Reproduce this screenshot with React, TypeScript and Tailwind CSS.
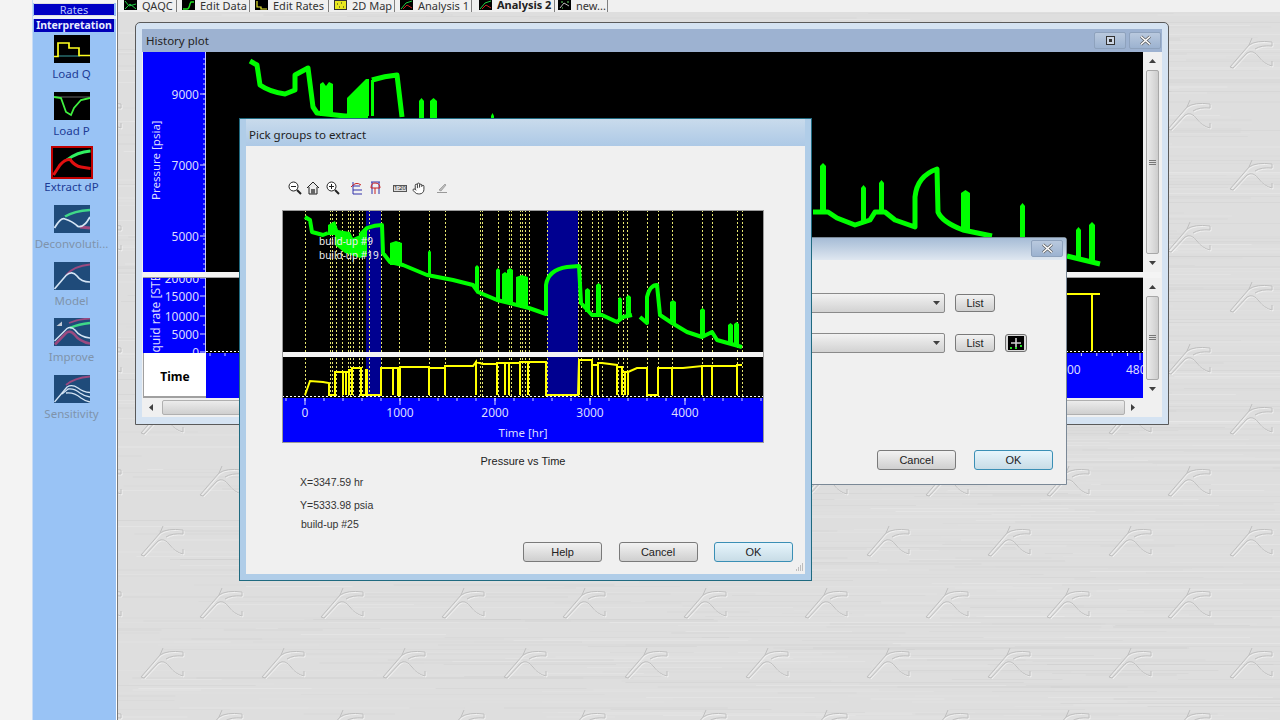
import React from "react";
import { Hand } from "lucide-react";

const streaks: { x: number; y: number; w: number; c: string; o: number }[] = [];
let seed = 12345;
const rnd = () => {
  seed = (seed * 16807) % 2147483647;
  return seed / 2147483647;
};
for (let y = 0; y < 720; y += 1.5) {
  const n = 1 + Math.floor(rnd() * 3);
  for (let i = 0; i < n; i++) {
    streaks.push({
      x: 118 + rnd() * 1162 - 100,
      y,
      w: 60 + rnd() * 420,
      c: rnd() > 0.5 ? "#ffffff" : "#bcbcbc",
      o: 0.06 + rnd() * 0.16,
    });
  }
}

const MAIN_GREEN =
  "M250 61 L257 65 L260 85 Q270 92 285 94 L295 90 V75 L308 68 L313 107 L317 113 L345 116 L368 116 M372 80 Q385 76 397 75 L402 117 M813 212 L828 212 L837 218 L855 225 L870 220 L875 212 L885 212 L895 220 L915 227 V197 Q917 176 937 169 L938 212 Q942 222 963 230 L992 236 M1067 256 L1100 264";
const MAIN_BLOCKS = ["320,116 320,84 323,82 326,86 329,82 333,84 333,116", "347,116 347,98 357,88 366,79 369,79 369,116", "371,116 371,80 374,80 374,116"];
const MAIN_SPIKES: [number, number, number, number][] = [
  [419, 5, 98, 120], [430, 7, 98, 120], [491, 3, 113, 120], [820, 6, 163, 214], [861, 5, 185, 222], [879, 5, 180, 213], [961, 9, 190, 232], [1020, 5, 203, 240], [1076, 5, 227, 259], [1089, 6, 222, 263],
];

const PICK_GREEN =
  "M305 217 L310 220 L312 232 L323 235 L328 233 M360 235 L367 228 Q375 225 382 225 L383 253 L390 262 L403 265 L427 275 L453 280 L473 285 L478 292 L497 300 L529 308 L546 314 V285 Q548 270 567 267 L579 266 L581 303 L592 315 L602 315 L617 322 L623 317 L632 315 M640 317 L647 323 V297 Q650 285 657 285 L660 315 L672 323 L687 332 L702 337 L712 332 L717 340 L742 347";
const PICK_BLOB = "328,225 335,221 338,230 350,232 353,238 360,235 367,228 367,256 360,258 345,253 335,245 335,235 328,235";
const PICK_SPIKES: [number, number, number, number][] = [
  [390, 12, 241, 265], [428, 3, 250, 276], [475, 4, 265, 290], [496, 4, 268, 300], [502, 6, 272, 302], [507, 6, 268, 303], [516, 12, 275, 306], [585, 5, 288, 312], [596, 5, 283, 315], [618, 4, 297, 318], [626, 5, 295, 315], [670, 6, 300, 323], [700, 5, 308, 337], [728, 5, 323, 345], [734, 5, 322, 347],
];
const PICK_YELLOW =
  "M305 395 L310 381 L323 382 L329 383 V395 H335 V372 H343 V395 V372 H346 V395 V372 H349 V395 V370 H352 V395 V368 H361 V395 H366 V370 H367 V395 H381 V368 H393 V395 V368 H398 V395 H400 V367 H429 V395 V368 H445 V395 V366 H473 L476 362 V395 V362 L483 364 H497 V395 V363 H505 V395 V363 H509 V395 V363 H520 V395 V362 H528 V395 V362 H546 V395 H578 V395 L579 360 V395 V360 H592 V395 V365 H598 V395 V363 H602 L617 365 V395 V367 H622 V395 V372 H625 V395 V372 H628 V395 V372 L637 368 H647 V395 H658 V368 H672 V395 V368 H683 L702 366 V395 V366 H712 V395 V366 H737 V395 V365 H742";
const DASHES = [305, 330, 332, 336, 342, 348, 350, 353, 359, 362, 369, 381, 399, 429, 445, 480, 482, 498, 509, 511, 520, 522, 525, 529, 547, 578, 581, 592, 598, 602, 618, 623, 627, 647, 658, 672, 702, 712, 737, 742];

const TICKS = Array.from({ length: 26 }, (_, i) => 286 + i * 19);

function Logo() {
  return (
    <g fill="none" strokeWidth="1">
      <g stroke="#ffffff" opacity="0.55" transform="translate(1 1)">
        <path d="M1 30 L20 8 Q27 3 43 5 V9 Q32 8 26 12" />
        <path d="M4 31 L18 16 Q24 12 30 20 Q35 27 43 29 V24" />
      </g>
      <g stroke="#bfbfbf">
        <path d="M1 30 L20 8 Q27 3 43 5 V9 Q32 8 26 12" />
        <path d="M4 31 L18 16 Q24 12 30 20 Q35 27 43 29 V24" />
        <path d="M20 8 L23 1" />
        <path d="M1 30 L4 31" />
      </g>
    </g>
  );
}

function Metal() {
  return (
    <svg className="absolute inset-0 h-full w-full" viewBox="118 0 1162 720" preserveAspectRatio="none">
      <defs>
        <pattern id="logo" x="562" y="587" width="121" height="122" patternUnits="userSpaceOnUse">
          <Logo />
          <g transform="translate(62 60)">
            <Logo />
          </g>
        </pattern>
      </defs>
      <rect x="118" y="0" width="1162" height="720" fill="#dedede" />
      {streaks.map((s, i) => (
        <line key={i} x1={s.x} x2={s.x + s.w} y1={s.y} y2={s.y} stroke={s.c} strokeOpacity={s.o} strokeWidth="1" />
      ))}
      <rect x="118" y="0" width="1162" height="720" fill="url(#logo)" />
    </svg>
  );
}

function TabIcon({ children, bg = "#000000" }: { children: React.ReactNode; bg?: string }) {
  return (
    <svg width="13" height="10" viewBox="0 0 13 10" className="shrink-0">
      <rect width="13" height="10" fill={bg} />
      {children}
    </svg>
  );
}

function Tab({ icon, label, w, bold }: { icon: React.ReactNode; label: string; w: string; bold?: boolean }) {
  return (
    <div className={`flex h-full items-start border-r border-[#808080] ${w}`}>
      {icon}
      <div className={bold ? "ml-[5px] whitespace-nowrap text-[11px] leading-[9px] font-bold text-[#222]" : "ml-[5px] whitespace-nowrap text-[11px] leading-[12px] text-[#333]"}>
        {label}
      </div>
    </div>
  );
}

function Tabs() {
  return (
    <div className="relative flex h-[12px] items-start bg-[#f0f0f0] pl-[6px]">
      <div className="mr-[5px] h-full"><Tab w="w-[53px]" label="QAQC" icon={<TabIcon><path d="M1 1 L5 6 L12 4 M1 9 L6 4 L12 9" stroke="#22cc44" fill="none" /></TabIcon>} /></div>
      <div className="mr-[5px] h-full"><Tab w="w-[68px]" label="Edit Data" icon={<TabIcon><path d="M1 9 H5 Q7 9 8 4 L9 2 H12" stroke="#22dd22" fill="none" strokeWidth="1.4" /></TabIcon>} /></div>
      <div className="mr-[5px] h-full"><Tab w="w-[74px]" label="Edit Rates" icon={<TabIcon><path d="M2 1 V7 H6 V9 H12" stroke="#eeee33" fill="none" strokeWidth="1.2" /></TabIcon>} /></div>
      <div className="mr-[5px] h-full"><Tab w="w-[61px]" label="2D Map" icon={<TabIcon bg="#e8e820"><rect x="0.5" y="0.5" width="12" height="9" fill="none" stroke="#333" /><path d="M3 4 h1 M7 3 h1 M5 7 h1 M9 7 h1" stroke="#222" /></TabIcon>} /></div>
      <div className="mr-[7px] h-full"><Tab w="w-[72px]" label="Analysis 1" icon={<TabIcon><path d="M1 9 L6 3 L12 1" stroke="#22cc44" fill="none" /><path d="M3 9 L7 5 L12 8" stroke="#cc2222" fill="none" /></TabIcon>} /></div>
      <div className="mr-[3px] h-full"><Tab bold w="w-[76px]" label="Analysis 2" icon={<TabIcon><path d="M1 9 L6 3 L12 1" stroke="#22cc44" fill="none" /><path d="M3 9 L7 5 L12 8" stroke="#cc2222" fill="none" /></TabIcon>} /></div>
      <Tab w="w-[50px]" label="new..." icon={<TabIcon><path d="M2 8 L6 3 L11 6" stroke="#bbbbbb" fill="none" /><path d="M3 2 h2 M9 2 h2 M4 8 h1" stroke="#66dd66" /></TabIcon>} />
    </div>
  );
}

const ARROW = { up: "M0 4 L3.5 0 L7 4 Z", down: "M0 0 L3.5 4 L7 0 Z", left: "M4 0 L0 3.5 L4 7 Z", right: "M0 0 L4 3.5 L0 7 Z" };

function Arrow({ dir }: { dir: keyof typeof ARROW }) {
  const horiz = dir === "left" || dir === "right";
  return (
    <svg width={horiz ? 4 : 7} height={horiz ? 7 : 4} viewBox={horiz ? "0 0 4 7" : "0 0 7 4"} className="shrink-0">
      <path d={ARROW[dir]} fill="#404040" />
    </svg>
  );
}

function VScroll({ h, thumb }: { h: string; thumb: string }) {
  return (
    <div className={`flex w-[18px] flex-col items-center bg-[#f0f0f0] ${h}`}>
      <div className="flex h-[18px] items-center"><Arrow dir="up" /></div>
      <div className={`flex w-[13px] flex-col items-center justify-center gap-[1px] rounded-[2px] border border-[#a8a8a8] bg-gradient-to-r from-[#ececec] to-[#cdcdcd] ${thumb}`}>
        <div className="h-px w-[7px] bg-[#777]" />
        <div className="h-px w-[7px] bg-[#777]" />
        <div className="h-px w-[7px] bg-[#777]" />
      </div>
      <div className="mt-auto flex h-[18px] items-center"><Arrow dir="down" /></div>
    </div>
  );
}

function WinBtn({ children, w }: { children: React.ReactNode; w: string }) {
  return (
    <div className={`flex h-[17px] items-center justify-center rounded-[2px] border border-[#8ea2bd] bg-gradient-to-b from-[#b9c9de] to-[#9cb2d0] ${w}`}>
      {children}
    </div>
  );
}

function CloseX() {
  return (
    <svg width="13" height="11" viewBox="0 0 13 11">
      <path d="M2 1.5 L11 9.5 M11 1.5 L2 9.5" stroke="#555" strokeWidth="3" />
      <path d="M2 1.5 L11 9.5 M11 1.5 L2 9.5" stroke="#fff" strokeWidth="1.6" />
    </svg>
  );
}

function YAxis({ vb, h, ticks, minor, children }: { vb: string; h: number; ticks: [number, string][]; minor: number[]; children: React.ReactNode }) {
  return (
    <svg viewBox={vb} width="63" height={h} className="block shrink-0 bg-[#0000ff]">
      {children}
      <line x1="205.5" x2="205.5" y1="0" y2="720" stroke="#c8c8ff" />
      {minor.map((y) => (
        <line key={y} x1="203" x2="206" y1={y} y2={y} stroke="#c8c8ff" />
      ))}
      {ticks.map(([y, t]) => (
        <g key={t}>
          <line x1="200" x2="206" y1={y} y2={y} stroke="#e0e0ff" />
          <text x="199" y={y + 4.5} textAnchor="end" fontSize="12" fill="#dcdcff">{t}</text>
        </g>
      ))}
    </svg>
  );
}

function HistoryWindow() {
  const rangeY = Array.from({ length: 45 }, (_, i) => 59 + i * 5);
  const smallY = [287, 306, 325, 344];
  return (
    <div className="absolute left-[17px] top-[22px] flex h-[403px] w-[1034px] flex-col rounded-t-[5px] border border-[#5a5a5a] bg-[#d5e3f2] px-[6px] pt-[6px]">
      <div className="flex h-[23px] shrink-0 items-center justify-between bg-[#9db2d1] pl-[4px] pr-[1px]">
        <span className="text-[11.5px] text-[#222]">History plot</span>
        <div className="flex gap-[3px]">
          <WinBtn w="w-[32px]"><div className="flex h-[9px] w-[9px] items-center justify-center border border-[#333] bg-[#cdd6e4]"><div className="h-[3px] w-[3px] bg-[#333]" /></div></WinBtn>
          <WinBtn w="w-[32px]"><CloseX /></WinBtn>
        </div>
      </div>
      <div className="flex h-[346px] shrink-0 bg-[#f0f0f0] pl-[1px]">
        <div className="flex w-[1000px] flex-col">
          <div className="flex h-[220px]">
            <YAxis vb="143 52 63 220" h={220} ticks={[[94, "9000"], [165, "7000"], [236, "5000"]]} minor={rangeY}>
              <text transform="rotate(-90 160 200)" x="160" y="200" fontSize="11.5" fill="#dcdcff">Pressure [psia]</text>
            </YAxis>
            <svg viewBox="206 52 937 220" width="937" height="220" className="block bg-black">
              <path d={MAIN_GREEN} fill="none" stroke="#00ff00" strokeWidth="5" strokeLinejoin="round" />
              {MAIN_BLOCKS.map((p) => (
                <polygon key={p} points={p} fill="#00ff00" />
              ))}
              {MAIN_SPIKES.map(([x, w, t, b]) => (
                <polygon key={x} points={`${x},${b} ${x},${t + 3} ${x + w / 2},${t} ${x + w},${t + 3} ${x + w},${b}`} fill="#00ff00" />
              ))}
            </svg>
          </div>
          <div className="h-[6px] border-b border-[#a0a0a0] bg-[#f4f4f4]" />
          <div className="flex h-[75px]">
            <YAxis vb="143 278 63 75" h={75} ticks={[[278, "20000"], [296, "15000"], [316, "10000"], [334, "5000"], [352, "0"]]} minor={smallY}>
              <text transform="rotate(-90 160 362)" x="160" y="362" fontSize="12" fill="#dcdcff">Liquid rate [STB/D]</text>
            </YAxis>
            <svg viewBox="206 278 937 75" width="937" height="75" className="block bg-black">
              <path d="M1066 294 H1100 M1092 294 V351" fill="none" stroke="#ffff00" strokeWidth="2" />
              <line x1="206" x2="1143" y1="351.5" y2="351.5" stroke="#ffffff" strokeDasharray="2 2" />
            </svg>
          </div>
          <div className="flex h-[45px]">
            <div className="flex w-[63px] items-center justify-center border-b-2 border-l border-[#a0a0a0] bg-white pt-[4px]">
              <span className="text-[12px] font-bold text-black">Time</span>
            </div>
            <svg viewBox="206 353 937 45" width="937" height="45" className="block bg-[#0000ff]">
              {Array.from({ length: 50 }, (_, i) => 1066 + i * 15.4).filter((x) => x < 1143).map((x) => (
                <line key={x} x1={x} x2={x} y1="353" y2="356" stroke="#d0d0ff" />
              ))}
              {[210, 225, 240].map((x) => (
                <line key={x} x1={x} x2={x} y1="353" y2="356" stroke="#d0d0ff" />
              ))}
              <line x1="1140" x2="1140" y1="353" y2="360" stroke="#d0d0ff" />
              <text x="1067" y="374" fontSize="12" fill="#dcdcff">00</text>
              <text x="1126" y="374" fontSize="12" fill="#dcdcff">4800</text>
            </svg>
          </div>
        </div>
        <div className="flex flex-col">
          <VScroll h="h-[220px]" thumb="h-[185px]" />
          <div className="h-[6px] bg-[#f4f4f4]" />
          <VScroll h="h-[120px]" thumb="h-[85px]" />
        </div>
      </div>
      <div className="flex h-[19px] shrink-0 items-center bg-[#f0f0f0] pl-[7px] pr-[7px] pb-[1px]">
        <Arrow dir="left" />
        <div className="ml-[9px] h-[15px] w-[963px] rounded-[2px] border border-[#b0b0b0] bg-gradient-to-b from-[#ececec] to-[#cfcfcf]" />
        <div className="ml-[6px]"><Arrow dir="right" /></div>
      </div>
    </div>
  );
}

function Btn({ label, primary, w = "w-[79px]", h = "h-[20px]" }: { label: string; primary?: boolean; w?: string; h?: string }) {
  return (
    <div
      className={
        primary
          ? `flex ${h} ${w} items-center justify-center rounded-[3px] border border-[#3a8fb5] bg-gradient-to-b from-[#e6f5fc] to-[#c8dce6] text-[11px] text-[#222] font-['Liberation_Sans',sans-serif]`
          : `flex ${h} ${w} items-center justify-center rounded-[3px] border border-[#7a7a7a] bg-gradient-to-b from-[#f2f2f2] to-[#cfcfcf] text-[11px] text-[#222] font-['Liberation_Sans',sans-serif]`
      }
    >
      {label}
    </div>
  );
}

function Combo() {
  return (
    <div className="flex h-[20px] flex-1 items-center justify-end rounded-[2px] border border-[#8a8a8a] bg-gradient-to-b from-[#f2f2f2] to-[#d2d2d2] pr-[4px]">
      <Arrow dir="down" />
    </div>
  );
}

function BehindDialog() {
  return (
    <div className="absolute left-[382px] top-[237px] flex h-[248px] w-[567px] flex-col rounded-t-[3px] border border-[#7a8896] bg-[#f0f0f0]">
      <div className="flex h-[22px] items-start justify-end bg-gradient-to-b from-[#a6bcd6] to-[#dfe7f0] pr-[3px] pt-[2px]">
        <WinBtn w="w-[32px]"><CloseX /></WinBtn>
      </div>
      <div className="flex flex-1 flex-col pt-[33px]">
        <div className="flex items-center pr-[39px]">
          <Combo />
          <div className="ml-[10px] w-[40px]"><Btn label="List" w="w-[40px]" h="h-[18px]" /></div>
          <div className="ml-[10px] w-[22px]" />
        </div>
        <div className="mt-[20px] flex items-center pr-[39px]">
          <Combo />
          <div className="ml-[10px] w-[40px]"><Btn label="List" w="w-[40px]" h="h-[18px]" /></div>
          <div className="ml-[10px] flex h-[18px] w-[22px] items-center justify-center rounded-[3px] border border-[#707070] bg-[#d8d8d8]">
            <svg width="16" height="14" viewBox="0 0 16 14" className="block">
              <rect width="16" height="14" fill="#000" />
              <path d="M8 2 V12 M3 7 H13" stroke="#cfcfcf" strokeWidth="1.6" />
              <path d="M2 12 h2 M12 10 h2 M7 12 h2" stroke="#22dd22" strokeWidth="2" />
            </svg>
          </div>
        </div>
        <div className="mt-auto flex justify-end gap-[18px] pb-[14px] pr-[13px]">
          <Btn label="Cancel" />
          <Btn label="OK" primary />
        </div>
      </div>
    </div>
  );
}

function PickChart() {
  return (
    <svg viewBox="282 210 482 233" width="482" height="233" className="block">
      <rect x="282" y="210" width="482" height="233" fill="#000" />
      <rect x="366" y="210" width="15" height="188" fill="#000090" />
      <rect x="547" y="210" width="31" height="188" fill="#000090" />
      {DASHES.map((x) => (
        <line key={x} x1={x + 0.5} x2={x + 0.5} y1="210" y2="398" stroke="#e6e670" strokeDasharray="2 2" />
      ))}
      <polygon points={PICK_BLOB} fill="#00ff00" />
      <path d={PICK_GREEN} fill="none" stroke="#00ff00" strokeWidth="4" strokeLinejoin="round" />
      {PICK_SPIKES.map(([x, w, t, b]) => (
        <polygon key={x} points={`${x},${b} ${x},${t + 2} ${x + w / 2},${t} ${x + w},${t + 2} ${x + w},${b}`} fill="#00ff00" />
      ))}
      <text x="319" y="245" fontSize="10" fill="#f0f0f0">build-up #9</text>
      <text x="319" y="259" fontSize="10" fill="#f0f0f0">build-up #19</text>
      <rect x="282" y="352" width="482" height="5" fill="#f4f4f4" />
      <path d={PICK_YELLOW} fill="none" stroke="#ffff00" strokeWidth="2" />
      <rect x="282" y="398" width="482" height="45" fill="#0000ff" />
      <line x1="282" x2="764" y1="396.5" y2="396.5" stroke="#ffffff" strokeDasharray="2 2" />
      {TICKS.map((x) => (
        <line key={x} x1={x} x2={x} y1="398" y2="401" stroke="#d0d0ff" />
      ))}
      {[305, 400, 495, 590, 685].map((x) => (
        <line key={x} x1={x} x2={x} y1="398" y2="405" stroke="#e0e0ff" />
      ))}
      {[["0", 305], ["1000", 400], ["2000", 495], ["3000", 590], ["4000", 685]].map(([t, x]) => (
        <text key={t as string} x={x as number} y="417" fontSize="12" textAnchor="middle" fill="#dcdcff">{t}</text>
      ))}
      <text x="523" y="437" fontSize="11.5" textAnchor="middle" fill="#dcdcff">Time [hr]</text>
      <rect x="282.5" y="210.5" width="481" height="232" fill="none" stroke="#9a9a9a" />
    </svg>
  );
}

function Toolbar() {
  return (
    <div className="flex h-[14px] items-center pl-[42px]">
      <svg width="14" height="14" viewBox="0 0 14 14"><circle cx="5.5" cy="5.5" r="4.5" fill="#fff" stroke="#222" /><path d="M3 5.5 H8" stroke="#222" /><path d="M9 9 L13 13" stroke="#222" strokeWidth="2" /></svg>
      <svg className="ml-[4px]" width="14" height="14" viewBox="0 0 14 14"><path d="M1 7 L7 1 L13 7 M3 6 V13 H11 V6" fill="#e8e8e8" stroke="#222" /><rect x="5" y="8" width="4" height="5" fill="#666" /></svg>
      <svg className="ml-[6px]" width="14" height="14" viewBox="0 0 14 14"><circle cx="5.5" cy="5.5" r="4.5" fill="#fff" stroke="#222" /><path d="M3 5.5 H8 M5.5 3 V8" stroke="#222" /><path d="M9 9 L13 13" stroke="#222" strokeWidth="2" /></svg>
      <svg className="ml-[10px]" width="13" height="14" viewBox="0 0 13 14"><path d="M3 1 V13 H12 M3 9 H12 M3 5 H10" stroke="#3333aa" fill="none" /><path d="M1 6 Q6 0 11 4" stroke="#cc2222" fill="none" /></svg>
      <svg className="ml-[6px]" width="13" height="14" viewBox="0 0 13 14"><path d="M2 1 H11 M3 1 V13 M10 1 V13" stroke="#3333aa" fill="none" /><path d="M2 7 Q2 2 6 2 Q11 2 11 7 H2 M6 7 V13" stroke="#cc2222" fill="none" /></svg>
      <div className="ml-[11px] flex h-[7px] w-[14px] items-center justify-center overflow-hidden border border-[#555] bg-[#ddd] text-[6px] leading-none text-[#222]">1:20</div>
      <div className="ml-[5px] flex w-[13px] justify-center"><Hand size={13} color="#222" fill="#fff" strokeWidth={1.6} /></div>
      <svg className="ml-[11px]" width="12" height="12" viewBox="0 0 12 12"><path d="M3 8 L9 2 L10 3 L5 9 Z" fill="#bbb" stroke="#888" strokeWidth="0.6" /><path d="M1 10.5 H11" stroke="#999" /></svg>
    </div>
  );
}

function PickDialog() {
  return (
    <div className="absolute left-[121px] top-[118px] flex h-[463px] w-[573px] flex-col border border-[#1f6a80] bg-[#b0cde8] px-[6px] pb-[6px]">
      <div className="flex h-[27px] shrink-0 items-center bg-gradient-to-b from-[#c9dbec] to-[#adc9e6] pl-[3px] pt-[5px]">
        <span className="text-[11.5px] text-[#222]">Pick groups to extract</span>
      </div>
      <div className="flex flex-1 flex-col bg-[#f0f0f0] pt-[35px]">
        <Toolbar />
        <div className="ml-[36px] mt-[15px] w-[482px]">
          <PickChart />
          <div className="mt-[11px] text-center text-[11px] leading-[14px] text-[#222] font-['Liberation_Sans',sans-serif]">Pressure vs Time</div>
        </div>
        <div className="pl-[54px] text-[10.5px] leading-[14px] text-[#333] font-['Liberation_Sans',sans-serif]">
          <div className="mt-[7px]">X=3347.59 hr</div>
          <div className="mt-[9px]">Y=5333.98 psia</div>
          <div className="mt-[5px] pl-[1px]">build-up #25</div>
        </div>
        <div className="mt-auto flex justify-end gap-[16.5px] pb-[12px] pr-[12px]">
          <Btn label="Help" />
          <Btn label="Cancel" />
          <Btn label="OK" primary />
        </div>
      </div>
      <svg className="absolute bottom-[8px] right-[7px]" width="9" height="9" viewBox="0 0 9 9">
        <path d="M7 1 h1 M5 3 h1 M7 3 h1 M3 5 h1 M5 5 h1 M7 5 h1 M1 7 h1 M3 7 h1 M5 7 h1 M7 7 h1" stroke="#8a8a8a" />
      </svg>
    </div>
  );
}

const NAVY = "#1f4b7a";
const ICONS: { label: string; disabled?: boolean; draw: React.ReactNode }[] = [
  {
    label: "Load Q",
    draw: (
      <svg width="36" height="28" viewBox="0 0 36 28" className="shrink-0">
        <rect width="36" height="28" fill="#000" />
        <path d="M4 21 H26" stroke="#3aa0a0" />
        <path d="M0 21.5 H4 V8 H15 V13 H25 V20.5 H36" fill="none" stroke="#ffff20" strokeWidth="1.7" />
      </svg>
    ),
  },
  {
    label: "Load P",
    draw: (
      <svg width="36" height="28" viewBox="0 0 36 28" className="shrink-0">
        <rect width="36" height="28" fill="#000" />
        <path d="M0 5 H36" stroke="#666" />
        <path d="M0 5 L7 6 L12 20 L17 23 L20 16 L27 8 L36 6" fill="none" stroke="#40f040" strokeWidth="1.8" />
      </svg>
    ),
  },
  {
    label: "Extract dP",
    draw: (
      <svg width="42" height="33" viewBox="0 0 42 33" className="shrink-0">
        <rect x="1" y="1" width="40" height="31" fill="#000" stroke="#c00000" strokeWidth="2" />
        <path d="M16 14 Q26 6 39.5 5" fill="none" stroke="#30f060" strokeWidth="3" />
        <path d="M2.5 29 L9 19 Q14 13 19 13.5 Q24 20 30 21 L39.5 22.5" fill="none" stroke="#e01010" strokeWidth="3" />
      </svg>
    ),
  },
  {
    label: "Deconvoluti...",
    disabled: true,
    draw: (
      <svg width="36" height="28" viewBox="0 0 36 28" className="shrink-0">
        <rect width="36" height="28" fill={NAVY} />
        <path d="M11 11.5 Q20 6 36 5" fill="none" stroke="#40d888" strokeWidth="2.6" />
        <path d="M26 22 L36 23" fill="none" stroke="#a04a80" strokeWidth="3" />
        <path d="M0.5 23 Q7 12 11 14 Q18 16 24 21.5 Q30 23 36 12" fill="none" stroke="#d4e4f4" strokeWidth="1.8" />
      </svg>
    ),
  },
  {
    label: "Model",
    disabled: true,
    draw: (
      <svg width="36" height="28" viewBox="0 0 36 28" className="shrink-0">
        <rect width="36" height="28" fill={NAVY} />
        <path d="M12 13 Q20 4 36 2.5" fill="none" stroke="#9a4a80" strokeWidth="1.8" />
        <path d="M0.5 27 L12 13.5 Q18 8 23 14 Q27 20 36 20" fill="none" stroke="#d4e4f4" strokeWidth="1.6" />
      </svg>
    ),
  },
  {
    label: "Improve",
    disabled: true,
    draw: (
      <svg width="36" height="28" viewBox="0 0 36 28" className="shrink-0">
        <rect width="36" height="28" fill={NAVY} />
        <path d="M2.5 8 L8 3.5 V8 Z" fill="#c0c8d4" />
        <path d="M15 5 Q24 1 36 0.5" fill="none" stroke="#9a4a80" strokeWidth="1.8" />
        <path d="M1 26.5 L12 15 Q16 12 20 16 Q26 24 36 25.5" fill="none" stroke="#9a4a80" strokeWidth="2.6" />
        <path d="M16 10 Q25 6 36 5" fill="none" stroke="#40d888" strokeWidth="2.6" />
        <path d="M0.5 23 L13 10.5 Q17 8 21 12 Q26 19 36 20" fill="none" stroke="#d4e4f4" strokeWidth="1.4" />
      </svg>
    ),
  },
  {
    label: "Sensitivity",
    disabled: true,
    draw: (
      <svg width="36" height="28" viewBox="0 0 36 28" className="shrink-0">
        <rect width="36" height="28" fill={NAVY} />
        <path d="M12 10 Q20 3 36 1.5" fill="none" stroke="#9a4a80" strokeWidth="1.8" />
        <path d="M0.5 27 L13 12 Q18 9 24 13 Q29 17 36 17.5" fill="none" stroke="#d4e4f4" strokeWidth="1.3" />
        <path d="M8 19 L14 14 Q20 13 26 18 Q30 21 36 22" fill="none" stroke="#d4e4f4" strokeWidth="1.3" />
        <path d="M12 18 Q20 17 27 23 Q31 26 36 27" fill="none" stroke="#d4e4f4" strokeWidth="1.3" />
      </svg>
    ),
  },
];

function Sidebar() {
  return (
    <div className="flex h-full w-[84px] shrink-0 flex-col border-l border-[#c8dcf5] bg-[#99c3f5]">
      <div className="bg-[#f4f4f4] pb-[3px]" />
      <div className="mx-[1px] flex h-[13px] w-[80px] items-center justify-center border-y border-[#e0e0e0] bg-[#0000c4] text-[11px] leading-none text-[#b8c4ff]">Rates</div>
      <div className="h-[3px] bg-[#eef3fb]" />
      <div className="mx-[1px] flex h-[13px] w-[80px] items-center justify-center bg-[#0000b8] text-[10.5px] font-bold leading-none text-[#e8ecff]">Interpretation</div>
      <div className="flex flex-col pt-[3px]">
        {ICONS.map((it) => (
          <div key={it.label} className="flex h-[56.7px] flex-col items-center pr-[6px]">
            <div className="flex h-[28px] items-center justify-center">{it.draw}</div>
            <div className={it.disabled ? "mt-[3px] whitespace-nowrap text-[11.5px] leading-[16px] text-[#7f93ab]" : "mt-[3px] whitespace-nowrap text-[11.5px] leading-[16px] text-[#1d3c96]"}>
              {it.label}
            </div>
          </div>
        ))}
      </div>
    </div>
  );
}

export default function App() {
  return (
    <div className="flex h-[720px] w-[1280px] overflow-hidden bg-[#f3f3f3] font-['Noto_Sans','Liberation_Sans',sans-serif]">
      <div className="w-[32px] shrink-0 bg-[#f3f3f3]" />
      <Sidebar />
      <div className="flex w-[2px] shrink-0"><div className="w-[1px] bg-white" /><div className="w-[1px] bg-[#777]" /></div>
      <div className="relative flex min-w-0 flex-1 flex-col">
        <Metal />
        <div className="relative"><Tabs /></div>
        <div className="absolute inset-0 top-0">
          <HistoryWindow />
          <BehindDialog />
          <PickDialog />
        </div>
      </div>
    </div>
  );
}
